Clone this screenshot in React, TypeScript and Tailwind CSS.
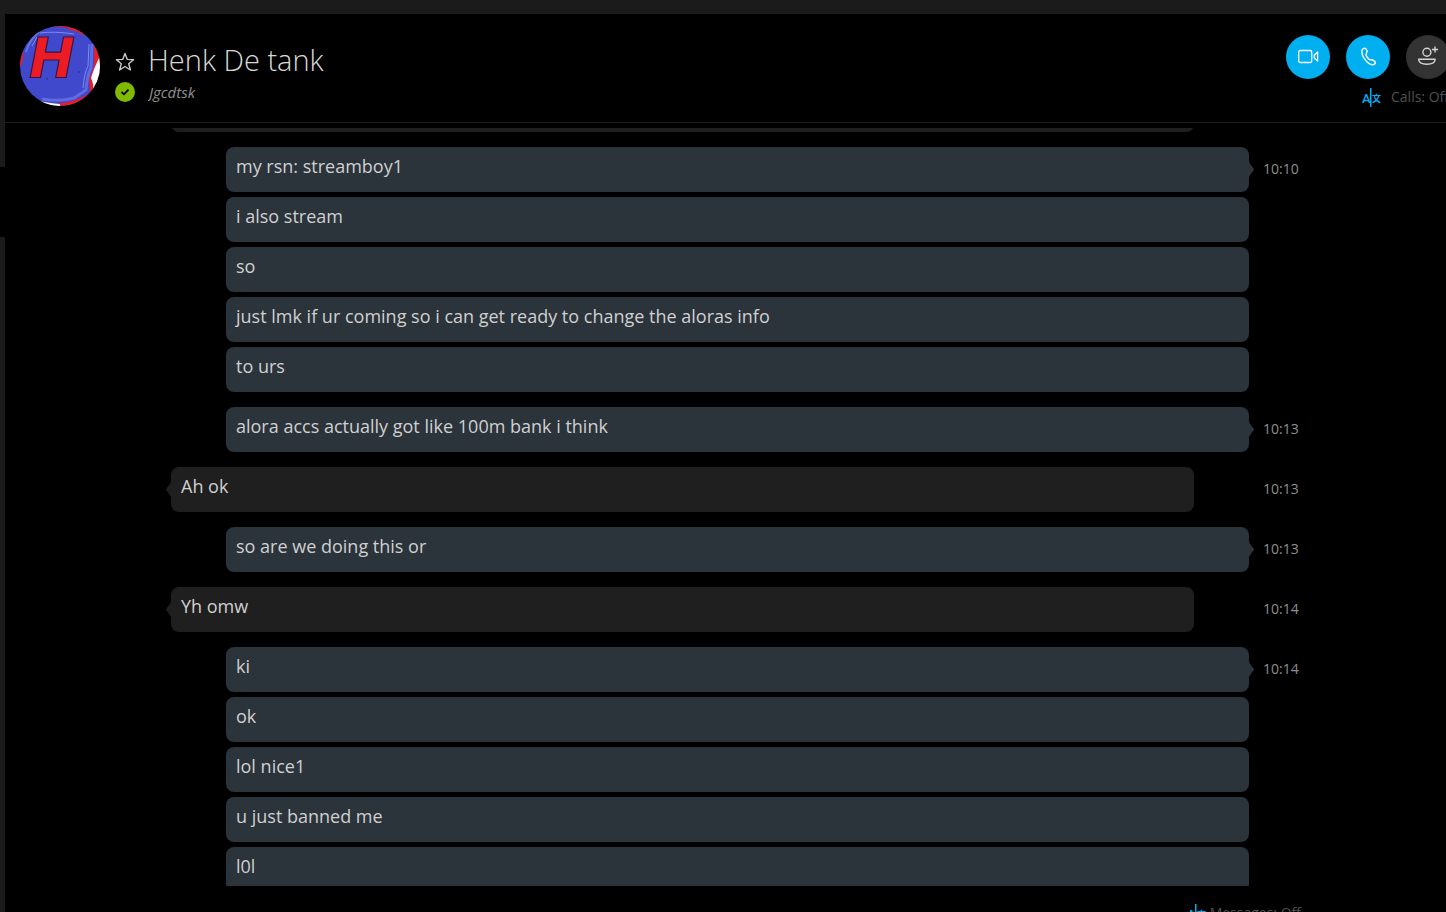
import React from 'react';
import clsx from 'clsx';

interface MessageGroup {
  id: number;
  own: boolean;
  time: string;
  messages: string[];
}

const groups: MessageGroup[] = [
  { id: 1, own: false, time: '', messages: [''] },
  {
    id: 2,
    own: true,
    time: '10:10',
    messages: [
      'my rsn: streamboy1',
      'i also stream',
      'so',
      'just lmk if ur coming so i can get ready to change the aloras info',
      'to urs',
    ],
  },
  { id: 3, own: true, time: '10:13', messages: ['alora accs actually got like 100m bank i think'] },
  { id: 4, own: false, time: '10:13', messages: ['Ah ok'] },
  { id: 5, own: true, time: '10:13', messages: ['so are we doing this or'] },
  { id: 6, own: false, time: '10:14', messages: ['Yh omw'] },
  { id: 7, own: true, time: '10:14', messages: ['ki', 'ok', 'lol nice1', 'u just banned me', 'l0l'] },
];

const Avatar: React.FC = () => (
  <svg viewBox="0 0 80 80" className="size-20 shrink-0" role="img" aria-label="Henk De tank">
    <defs>
      <clipPath id="avatar-clip">
        <circle cx="40" cy="40" r="40" />
      </clipPath>
    </defs>
    <g clipPath="url(#avatar-clip)">
      <rect width="80" height="80" fill="#4048cc" />
      {/* red and white paint round the edge */}
      <path d="M34 0 H56 L66 10 Q56 5 46 2 Q40 0 34 1Z" fill="#ed1c24" />
      <path d="M74 18 L82 28 V62 L68 74 Q71 64 69 54 L74 40Z" fill="#ed1c24" />
      <path d="M80 30 V56 L73 65 Q74 58 71 52 Q74 42 80 30Z" fill="#fff" />
      <path d="M34 78 Q54 77 68 68 L62 80 H34Z" fill="#ed1c24" />
      <path d="M20 75 Q28 77 40 78 L40 82 H18Z" fill="#fff" />
      <path d="M0 30 L3 25 Q4 32 1 40 L0 40Z" fill="#ed1c24" />
      <path d="M6 26 Q9 14 20 5" fill="none" stroke="#6674e3" strokeWidth="2" />
      <path d="M20 7 Q34 5 54 8 M12 20 L17 11 M69 18 L68 40 Q64 48 63 62" fill="none" stroke="#7f8cec" strokeWidth="1" />
      <path d="M72 18 L71 42 Q67 50 66 64 L54 72 Q40 76 22 73" fill="none" stroke="#5f6ce0" strokeWidth="3" />
      <text
        x="9"
        y="51"
        fontFamily="DejaVu Sans, sans-serif"
        fontSize="55"
        fontWeight="bold"
        fontStyle="italic"
        fill="#ed1c24"
        stroke="#35153f"
        strokeWidth="1.2"
      >
        H
      </text>
      <circle cx="27" cy="53" r="0.8" fill="#262b80" />
      <circle cx="59" cy="46" r="0.8" fill="#262b80" />
    </g>
  </svg>
);

const TranslatorIcon: React.FC = () => (
  <svg viewBox="0 0 20 20" className="size-5 shrink-0" fill="#00aff0" aria-hidden="true">
    <text x="1" y="16" fontFamily="Liberation Sans Narrow, Roboto, sans-serif" fontSize="13" fontWeight="500">
      A
    </text>
    <rect x="9" y="1" width="1.5" height="19" />
    <text x="11" y="15" fontFamily="Noto Sans CJK JP, sans-serif" fontSize="9" fontWeight="bold">
      文
    </text>
  </svg>
);

const BubbleTail: React.FC<{ own: boolean }> = ({ own }) => (
  <svg
    viewBox="0 0 5 18"
    className={clsx(
      'absolute top-[13px] h-[18px] w-[5px]',
      own ? '-right-[5px] fill-[#2b333b]' : '-left-[5px] -scale-x-100 fill-[#1f1f1f]'
    )}
    aria-hidden="true"
  >
    <path d="M0 0 C0 3 1 4 3 6.5 Q5 9 5 9.5 Q5 10 3 12.5 C1 15 0 16 0 18Z" />
  </svg>
);

const Header: React.FC = () => (
  <header className="flex h-[109px] shrink-0 items-start overflow-hidden border-b border-[#1f1f1f] pl-[15px] pt-3">
    <Avatar />
    <div className="ml-[14px] grid min-w-0 flex-1 grid-cols-[22px_1fr] items-center gap-x-3 pt-3">
      <button type="button" aria-label="Add to favorites" className="flex h-11 items-center justify-center pt-1">
        <svg viewBox="0 0 20 20" className="size-5" fill="none" stroke="#c8c8c8" strokeWidth="1.4" strokeLinejoin="round">
          <path d="M10 1.5 L12.3 7.4 L18.6 7.7 L13.7 11.7 L15.4 18 L10 14.5 L4.6 18 L6.3 11.7 L1.4 7.7 L7.7 7.4Z" />
        </svg>
      </button>
      <h1 className="truncate text-[29px] font-light leading-[44px] text-[#d8d8d8]">Henk De tank</h1>
      <svg viewBox="0 0 20 20" className="mx-auto size-5" role="img" aria-label="Online">
        <circle cx="10" cy="10" r="10" fill="#7fba00" />
        <path d="M6.5 10 L9 12.3 L13.5 7.7" fill="none" stroke="#000" strokeWidth="1.8" />
      </svg>
      <p className="truncate pl-px text-[15px] italic leading-5 text-[#8f8f8f]">Jgcdtsk</p>
    </div>
    <div className="-mr-2 w-[168px] shrink-0 pt-[9px]">
      <div className="flex gap-4">
        <button type="button" aria-label="Video call" className="flex size-11 shrink-0 items-center justify-center rounded-full bg-[#00aff0]">
          <svg viewBox="0 0 22 22" className="size-[22px]" fill="none" stroke="#fff" strokeWidth="1.3" strokeLinejoin="round">
            <rect x="1.7" y="4.5" width="13" height="12" rx="1.5" />
            <path d="M20.6 6 V15 L17.2 11.7 V9.3Z" />
          </svg>
        </button>
        <button type="button" aria-label="Call" className="flex size-11 shrink-0 items-center justify-center rounded-full bg-[#00aff0]">
          <svg viewBox="0 0 22 22" className="size-[22px]" fill="none" stroke="#fff" strokeWidth="1.4" strokeLinejoin="round">
            <path d="M5 4.1 Q6.8 1.6 8.8 2.6 Q10.6 4.6 9.8 6.6 Q8.5 8.2 9.1 9.5 Q10.2 12 12.2 13.4 Q13.2 14 14.8 13.7 Q16.8 14.1 18.3 15.9 Q18.8 17.7 16.6 18.6 Q12.8 19.4 8.6 14.4 Q3.9 8.5 5 4.1Z" />
          </svg>
        </button>
        <button type="button" aria-label="Add people" className="flex size-11 shrink-0 items-center justify-center rounded-full bg-[#333333]">
          <svg viewBox="0 0 22 22" className="size-[22px]" fill="none" stroke="#d4d4d4" strokeWidth="1.4">
            <circle cx="9.9" cy="6.3" r="4" />
            <path d="M1.6 13.3 H18.2 Q17.8 18.3 9.9 18.3 Q2 18.3 1.6 13.3Z" strokeLinejoin="round" />
            <path d="M18 0.5 V6.5 M15 3.5 H21" />
          </svg>
        </button>
      </div>
      <div className="flex items-center gap-[10px] whitespace-nowrap pl-[75px] pt-2 text-sm leading-5 text-[#505050]">
        <TranslatorIcon />
        <span>Calls: Off</span>
      </div>
    </div>
  </header>
);

const Group: React.FC<{ group: MessageGroup }> = ({ group }) => (
  <li className="flex shrink-0 items-start gap-[14px]">
    <ul className={clsx('min-w-0 flex-1 space-y-[5px]', group.own ? 'pl-[55px]' : 'pr-[55px]')}>
      {group.messages.map((message, i) => (
        <li
          key={i}
          className={clsx(
            'relative min-h-[45px] rounded-lg px-[10px] pb-3 pt-[7px] text-lg leading-6 text-[#d0d0d0]',
            group.own ? 'bg-[#2b333b]' : 'bg-[#1f1f1f]'
          )}
        >
          {i === 0 && <BubbleTail own={group.own} />}
          {message}
        </li>
      ))}
    </ul>
    <time className="w-9 shrink-0 whitespace-nowrap pt-3 text-sm leading-5 text-[#8f8f8f]">{group.time}</time>
  </li>
);

export default function App() {
  return (
    <div className="flex h-screen flex-col overflow-hidden bg-black font-['Open_Sans','Noto_Sans',sans-serif]">
      <div className="h-[14px] shrink-0 bg-[#1b1b1b]" />
      <div className="flex min-h-0 flex-1">
        {/* edge of the contact list, with a gap at the selected chat */}
        <div className="flex w-[5px] shrink-0 flex-col">
          <div className="h-[153px] bg-[#1b1b1b]" />
          <div className="h-[70px]" />
          <div className="flex-1 bg-[#1b1b1b]" />
        </div>

        <div className="flex min-w-0 flex-1 flex-col">
          <Header />

          <main className="mt-[5px] flex min-h-0 flex-1 flex-col justify-end overflow-hidden">
            <ul className="-mb-[6px] flex flex-col gap-[15px] pl-[166px] pr-[147px]">
              {groups.map((group) => (
                <Group key={group.id} group={group} />
              ))}
            </ul>
          </main>

          <footer className="flex h-[26px] shrink-0 items-start justify-end gap-1 overflow-hidden whitespace-nowrap pr-[145px] pt-[17px] text-sm leading-5 text-[#505050]">
            <TranslatorIcon />
            <span>Messages: Off</span>
          </footer>
        </div>
      </div>
    </div>
  );
}
